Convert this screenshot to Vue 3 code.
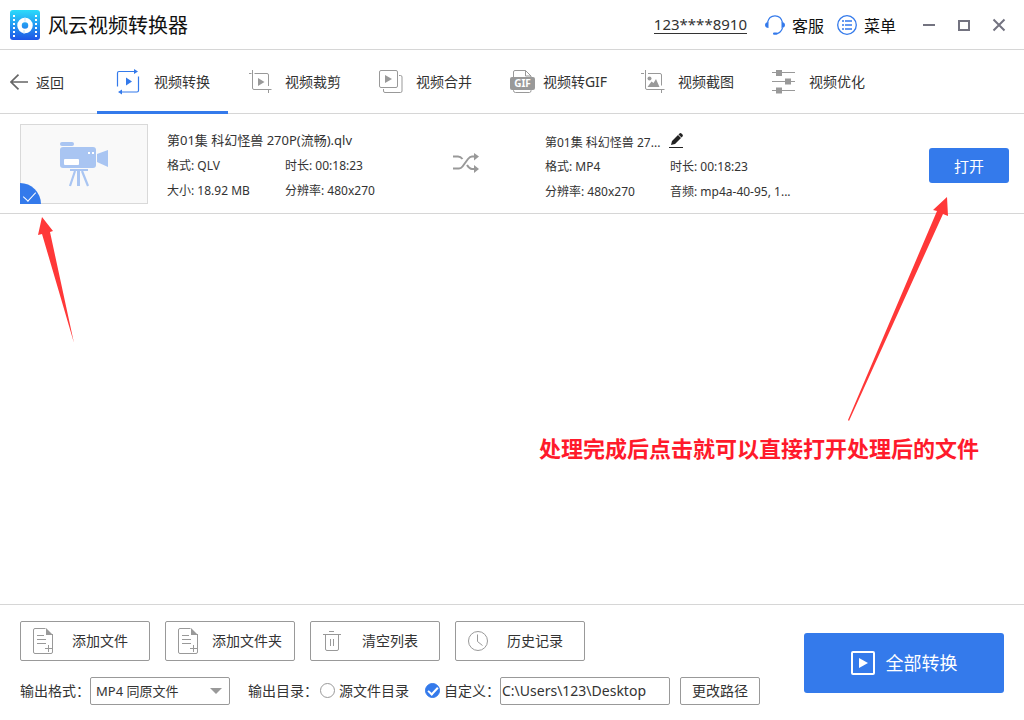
<script setup>
import { ref } from 'vue'

const tabs = [
  { id: 'convert', label: '视频转换' },
  { id: 'crop', label: '视频裁剪' },
  { id: 'merge', label: '视频合并' },
  { id: 'gif', label: '视频转GIF' },
  { id: 'shot', label: '视频截图' },
  { id: 'tune', label: '视频优化' }
]
const activeTab = ref('convert')

const actions = [
  { id: 'file', label: '添加文件' },
  { id: 'folder', label: '添加文件夹' },
  { id: 'clear', label: '清空列表' },
  { id: 'history', label: '历史记录' }
]

const selected = ref(true)
const format = ref('mp4')
const target = ref('custom')
const path = ref('C:\\Users\\123\\Desktop')
</script>

<template>
  <div class="app">
    <header class="titlebar">
      <svg class="logo" viewBox="0 0 30 30" aria-hidden="true">
        <defs>
          <linearGradient id="logoFill" x1="0" y1="0" x2="0" y2="1">
            <stop offset="0" stop-color="#2bdcfb" />
            <stop offset="1" stop-color="#1e55e6" />
          </linearGradient>
        </defs>
        <rect width="30" height="30" rx="3" fill="url(#logoFill)" />
        <path d="M4 5v22M26 5v22" stroke="#fff" stroke-width="2" stroke-dasharray="2 2" />
        <circle cx="15" cy="15.500" r="5.500" fill="none" stroke="#fff" stroke-width="4.500" />
        <path d="M15 7.500v4M14 20v4" stroke="#bfe0fb" stroke-width="1" />
      </svg>
      <h1>风云视频转换器</h1>
      <a class="account" href="#">123****8910</a>
      <button class="link support" type="button">
        <svg class="i20" viewBox="0 0 20 20" fill="none" aria-hidden="true">
          <path d="M2.500 7.500C3.500 3 6.500.800 10 .800s6.500 2.200 7.500 6.700M17.500 13c-1 3-3 5-5.500 5.700" stroke="#347aeb" stroke-width="1.200" />
          <path d="M3.500 7v6C1.500 13 0 12 0 10s1.500-3 3.500-3zM16.500 7v6c2 0 3.500-1 3.500-3s-1.500-3-3.500-3z" fill="#347aeb" />
          <rect x="8" y="17.500" width="4.500" height="2.300" rx="1.100" fill="#347aeb" />
        </svg>
        <span>客服</span>
      </button>
      <button class="link menu" type="button">
        <svg class="i20" viewBox="0 0 20 20" fill="none" stroke="#347aeb" aria-hidden="true">
          <circle cx="10" cy="10" r="9.300" stroke-width="1.300" />
          <path d="M5 6h2M8 6h7M5 10h2M8 10h7M5 14h2M8 14h7" stroke-width="1.500" />
        </svg>
        <span>菜单</span>
      </button>
      <div class="window-controls">
        <button type="button" aria-label="最小化">
          <svg viewBox="0 0 14 14"><path d="M1 7h12" stroke="#737380" stroke-width="2" /></svg>
        </button>
        <button type="button" aria-label="最大化">
          <svg viewBox="0 0 14 14"><rect x="2" y="3" width="10" height="9" fill="none" stroke="#737380" stroke-width="2" /></svg>
        </button>
        <button type="button" aria-label="关闭">
          <svg viewBox="0 0 14 14"><path d="M1.500 1.500l11 11M12.500 1.500l-11 11" stroke="#737380" stroke-width="2" /></svg>
        </button>
      </div>
    </header>

    <nav class="toolbar">
      <button class="back" type="button">
        <svg viewBox="0 0 18 16" fill="none" stroke="#666" stroke-width="1.700" aria-hidden="true">
          <path d="M8.500.700L1 8l7.500 7.300M1 8h17" />
        </svg>
        <span>返回</span>
      </button>
      <button
        v-for="tab in tabs"
        :key="tab.id"
        type="button"
        class="tab"
        :class="{ active: tab.id === activeTab }"
        @click="activeTab = tab.id"
      >
        <svg v-if="tab.id === 'convert'" viewBox="0 0 26 26" fill="none" stroke="#347aeb" aria-hidden="true">
          <path d="M1.500 17.500V4q0-1.500 1.500-1.500h16M22.500 7.500v14q0 1.500-1.500 1.500H5" stroke-width="1.200" />
          <path d="M18 0l4 2.500L18 5zM6 20.500L2 23l4 2.500zM10 8.500l6 4-6 4z" fill="#347aeb" stroke="none" />
        </svg>
        <svg v-else-if="tab.id === 'crop'" viewBox="0 0 26 26" fill="none" stroke="#999" aria-hidden="true">
          <path d="M2 4.500h2.500M5.500 1v18q0 1.500 1.500 1.500h17.500M7.500 4.500H20q1.500 0 1.500 1.500v11M21.500 21v3" />
          <path d="M11 9v8l6.500-4z" fill="#999" stroke="none" />
        </svg>
        <svg v-else-if="tab.id === 'merge'" viewBox="0 0 26 26" fill="none" stroke="#999" aria-hidden="true">
          <rect x="1.500" y="1.500" width="18" height="17" rx="1.500" />
          <path d="M21 6.500h1.500q1.500 0 1.500 1.500v14q0 1.500-1.500 1.500H7q-1.500 0-1.500-1.500v-2" />
          <path d="M7 6v8l7-4z" fill="#999" stroke="none" />
        </svg>
        <svg v-else-if="tab.id === 'gif'" viewBox="0 0 26 26" fill="none" stroke="#999" aria-hidden="true">
          <path d="M4.500 8V3q0-1.500 1.500-1.500h10.500l5.500 5.500v1M16.500 1.500V7H22M4.500 20v1.500Q4.500 23.500 6.500 23.500h14q1.500 0 1.500-2V20" />
          <rect x="1" y="8" width="25" height="13" rx="2" fill="#999" stroke="none" />
          <text x="13.500" y="18" text-anchor="middle" class="gif-text">GIF</text>
        </svg>
        <svg v-else-if="tab.id === 'shot'" viewBox="0 0 26 26" fill="none" stroke="#999" aria-hidden="true">
          <path d="M1 4.500h3M5.500 1v18q0 1.500 1.500 1.500h17.500M8 4.500h12q1.500 0 1.500 1.500v10.500M21.500 21v3" />
          <circle cx="9.500" cy="9.500" r="2" fill="#999" stroke="none" />
          <path d="M7.500 18l4-5.500 2 1.500 2.500-4 3.500 8z" fill="#999" stroke="none" />
        </svg>
        <svg v-else viewBox="0 0 26 26" fill="none" stroke="#999" aria-hidden="true">
          <path d="M1 3.500h23M1 12.500h23M1 21.500h23" />
          <path d="M5 1h6v6H5zM14 9.500h6v6h-6zM5 18.500h6v6H5z" fill="#999" stroke="none" />
        </svg>
        <span>{{ tab.label }}</span>
      </button>
    </nav>

    <main class="content">
      <ul class="list">
        <li class="item">
          <div class="thumb">
            <svg class="camera" viewBox="0 0 50 46" aria-hidden="true">
              <g fill="#a9c5f2">
                <rect x="1" y="0" width="14" height="4" rx="2" />
                <rect x="1" y="5" width="36" height="21" rx="3" />
                <path d="M38 12l11-4v17l-11-5z" />
                <path d="M11 27h18v2H11zM18 29h3v15h-3z" />
              </g>
              <path d="M16 29l-5 15M23 29l6 15" fill="none" stroke="#a9c5f2" stroke-width="2.200" />
              <rect x="5" y="17" width="15" height="6" rx="1" fill="#fff" />
              <path d="M29 10h2v2h-2zM33 10h2v2h-2z" fill="#fff" />
            </svg>
            <input v-model="selected" type="checkbox" class="pick" aria-label="选择" />
          </div>
          <div class="source">
            <h2>第01集 科幻怪兽 270P(流畅).qlv</h2>
            <p><span>格式: QLV</span><span>时长: 00:18:23</span></p>
            <p><span>大小: 18.92 MB</span><span>分辨率: 480x270</span></p>
          </div>
          <svg class="shuffle" viewBox="0 0 28 20" aria-hidden="true">
            <path d="M1 3.500h5q2.500 0 4.500 2.500M1 15.500h6q2 0 3.500-2l5.500-7.500q2-2.500 4-2.500h3M15 12q2.500 4 5 4h3" fill="none" stroke="#999" stroke-width="2" />
            <path d="M22 0l5 3.500-5 4zM22 12l5 4-5 4z" fill="#999" />
          </svg>
          <div class="result">
            <div class="name">
              <span>第01集 科幻怪兽 27...</span>
              <button type="button" aria-label="重命名">
                <svg viewBox="0 0 14 16">
                  <path d="M2 12l1-4 6-6 3 3-6 6zM9.500 1.500l1-1q1-1 2.500.500t.500 2.500l-1 1z" fill="#222" />
                  <path d="M0 14.500h14" stroke="#222" />
                </svg>
              </button>
            </div>
            <p><span>格式: MP4</span><span>时长: 00:18:23</span></p>
            <p><span>分辨率: 480x270</span><span>音频: mp4a-40-95, 1...</span></p>
          </div>
          <button class="primary open" type="button">打开</button>
        </li>
      </ul>
      <svg class="arrow arrow-left" viewBox="0 0 40 130" aria-hidden="true">
        <path d="M7 1L3 19l4-1 32 109L15 16l3-1z" fill="#ff3838" />
      </svg>
      <svg class="arrow arrow-right" viewBox="0 0 102 226" aria-hidden="true">
        <path d="M100 1L86 14l4 1L1 224l1 1 94-207 5 2z" fill="#ff3838" />
      </svg>
      <p class="note">处理完成后点击就可以直接打开处理后的文件</p>
    </main>

    <footer class="footer">
      <div class="controls">
        <div class="actions">
          <button v-for="a in actions" :key="a.id" type="button" class="outline action" :class="a.id">
            <svg v-if="a.id === 'file' || a.id === 'folder'" viewBox="0 0 24 28" fill="none" stroke="#999" aria-hidden="true">
              <path d="M14.500 1.500H4q-1.500 0-1.500 1.500v22q0 1.500 1.500 1.500h16q1.500 0 1.500-1.500V7M6 8.500h7M6 12.500h9M6 16.500h9M17.500 18v7M14 21.500h7" />
              <path d="M15 1l7 7h-7z" fill="#999" stroke="none" />
            </svg>
            <svg v-else-if="a.id === 'clear'" viewBox="0 0 24 28" fill="none" stroke="#999" aria-hidden="true">
              <path d="M8 4.500h5M2 7.500h18M4.500 8v14q0 1.500 1.500 1.500h10q1.500 0 1.500-1.500V8M9.500 12v7M12.500 12v7" />
            </svg>
            <svg v-else viewBox="0 0 24 28" fill="none" stroke="#999" aria-hidden="true">
              <circle cx="12" cy="14" r="9.500" />
              <path d="M11.500 7.500v7l5 4" />
            </svg>
            <span>{{ a.label }}</span>
          </button>
        </div>
        <div class="settings">
          <label for="format">输出格式：</label>
          <div class="select">
            <select id="format" v-model="format">
              <option value="mp4">MP4 同原文件</option>
            </select>
            <svg viewBox="0 0 12 6" aria-hidden="true"><path d="M0 0h12L6 6z" fill="#999" /></svg>
          </div>
          <span class="dir">输出目录：</span>
          <label class="radio source-dir">
            <input v-model="target" type="radio" name="target" value="source" />
            <span>源文件目录</span>
          </label>
          <label class="radio">
            <input v-model="target" type="radio" name="target" value="custom" />
            <span>自定义：</span>
          </label>
          <input v-model="path" type="text" class="path" aria-label="输出目录" />
          <button type="button" class="outline change">更改路径</button>
        </div>
      </div>
      <button class="primary all" type="button">
        <svg viewBox="0 0 24 24" aria-hidden="true">
          <rect x="1" y="1" width="22" height="22" rx="1" fill="none" stroke="#fff" stroke-width="2" />
          <path d="M8 7v10l9-5z" fill="#fff" />
        </svg>
        <span>全部转换</span>
      </button>
    </footer>
  </div>
</template>

<style>
body {
  margin: 0;
  background: #fff;
}
</style>

<style scoped>
.app {
  display: flex;
  flex-direction: column;
  min-height: 100vh;
  font-family: "Noto Sans", "Noto Sans CJK SC", sans-serif;
  font-size: 14px;
  line-height: 20px;
  color: #333;
}
.app * {
  box-sizing: border-box;
}
button,
input,
select {
  margin: 0;
  padding: 0;
  border: 0;
  background: none;
  font: inherit;
  color: inherit;
}
button {
  cursor: pointer;
}
svg {
  display: block;
  flex: none;
}
h1,
h2,
p,
ul {
  margin: 0;
  padding: 0;
  font-weight: 400;
}
span,
label,
h1,
h2 {
  white-space: nowrap;
}
.titlebar {
  display: flex;
  align-items: center;
  height: 50px;
  padding: 0 18px 0 10px;
  border-bottom: 1px solid #d6d6d6;
  color: #111;
}
.logo {
  width: 30px;
  height: 30px;
}
h1 {
  flex: 1;
  margin-left: 8px;
  padding-top: 2px;
  font-size: 20px;
  line-height: 28px;
}
.account {
  color: #333;
  font-size: 15px;
  line-height: 18px;
  text-decoration: none;
  border-bottom: 1px solid #333;
}
.link {
  display: flex;
  align-items: center;
  gap: 7px;
  font-size: 16px;
  line-height: 24px;
}
.link span {
  padding-top: 2px;
}
.support {
  margin-left: 18px;
}
.menu {
  margin-left: 13px;
}
.i20 {
  width: 20px;
  height: 20px;
}
.window-controls {
  display: flex;
  gap: 21px;
  margin-left: 26px;
}
.window-controls svg {
  width: 14px;
  height: 14px;
}
.toolbar {
  display: flex;
  height: 64px;
  border-bottom: 1px solid #d6d6d6;
}
.back {
  display: flex;
  align-items: center;
  gap: 8px;
  width: 97px;
  padding-left: 10px;
}
.back span {
  padding-top: 2px;
}
.back svg {
  width: 18px;
  height: 16px;
}
.tab {
  display: flex;
  align-items: center;
  width: 131px;
  height: 64px;
  padding: 3px 6px 0 19px;
  border-bottom: 3px solid transparent;
}
.tab.active {
  border-bottom-color: #347aeb;
}
.tab svg {
  width: 26px;
  height: 26px;
}
.tab span {
  flex: 1;
  text-align: center;
}
.gif-text {
  fill: #fff;
  stroke: none;
  font-size: 10px;
  font-weight: 700;
}
.content {
  position: relative;
  flex: 1;
}
.list {
  list-style: none;
}
.item {
  display: flex;
  align-items: flex-start;
  min-height: 100px;
  padding: 10px 15px 6px 20px;
  border-bottom: 1px solid #d6d6d6;
  font-size: 12px;
}
.thumb {
  position: relative;
  display: flex;
  justify-content: center;
  width: 128px;
  height: 80px;
  padding-top: 17px;
  border: 1px solid #d9d9d9;
  background: #f9f9f9;
}
.camera {
  width: 50px;
  height: 46px;
}
.pick {
  position: absolute;
  left: -1px;
  bottom: -1px;
  width: 21px;
  height: 21px;
  appearance: none;
  border-radius: 0 21px 0 0;
  background: #ccc;
}
.pick:checked {
  background: #347aeb;
}
.pick:checked::after {
  content: "";
  position: absolute;
  left: 6px;
  top: 6px;
  width: 6px;
  height: 11px;
  border: solid #fff;
  border-width: 0 1px 1px 0;
  transform: rotate(43deg);
}
.source {
  width: 285px;
  margin-left: 19px;
  padding-top: 6px;
}
h2 {
  margin-bottom: 6px;
  font-size: 13px;
  line-height: 20px;
}
.source p,
.result p {
  display: grid;
  height: 25px;
}
.source p {
  grid-template-columns: 118px 1fr;
}
.shuffle {
  width: 28px;
  height: 20px;
  margin-top: 29px;
}
.result {
  flex: 1;
  margin-left: 65px;
  padding-top: 9px;
}
.result p {
  grid-template-columns: 125px 1fr;
}
.name {
  display: flex;
  align-items: flex-start;
  gap: 9px;
  height: 24px;
}
.name svg {
  width: 14px;
  height: 16px;
}
.primary {
  border-radius: 3px;
  background: #347aeb;
  color: #fff;
}
.open {
  width: 80px;
  height: 35px;
  margin-top: 24px;
  font-size: 15px;
}
.arrow {
  position: absolute;
}
.arrow-left {
  left: 35px;
  top: 102px;
  width: 40px;
  height: 130px;
}
.arrow-right {
  right: 75px;
  top: 82px;
  width: 102px;
  height: 226px;
}
.note {
  position: absolute;
  right: 45px;
  top: 318px;
  color: #ff1a2b;
  font-size: 22px;
  font-weight: 700;
  line-height: 32px;
  white-space: nowrap;
}
.footer {
  display: flex;
  justify-content: space-between;
  align-items: flex-start;
  padding: 16px 20px 15px;
  border-top: 1px solid #d6d6d6;
}
.actions {
  display: flex;
  gap: 15px;
}
.outline {
  border: 1px solid #999;
  border-radius: 2px;
}
.action {
  display: flex;
  align-items: center;
  width: 130px;
  height: 40px;
  padding: 0 4px 0 10px;
}
.action.folder {
  padding-right: 0;
}
.action svg {
  width: 24px;
  height: 28px;
}
.action span {
  flex: 1;
  text-align: center;
}
.settings {
  display: flex;
  align-items: center;
  margin-top: 15px;
  height: 29px;
}
.select {
  position: relative;
  width: 140px;
}
.select select {
  width: 100%;
  height: 28px;
  padding-left: 5px;
  appearance: none;
  border: 1px solid #999;
  border-radius: 2px;
  font-size: 13px;
}
.select svg {
  position: absolute;
  right: 8px;
  top: 11px;
  width: 12px;
  height: 6px;
  pointer-events: none;
}
.dir {
  width: 72px;
  margin-left: 18px;
}
.radio {
  display: flex;
  align-items: center;
  gap: 4px;
}
.source-dir {
  width: 105px;
}
.radio input {
  position: relative;
  width: 15px;
  height: 15px;
  appearance: none;
  border: 1px solid #999;
  border-radius: 50%;
}
.radio input:checked {
  border-color: #347aeb;
  background: #347aeb;
}
.radio input:checked::after {
  content: "";
  position: absolute;
  left: 4px;
  top: 1px;
  width: 4px;
  height: 8px;
  border: solid #fff;
  border-width: 0 2px 2px 0;
  transform: rotate(43deg);
}
.path {
  width: 170px;
  height: 28px;
  padding: 0 1px;
  border: 1px solid #999;
  border-radius: 2px;
}
.change {
  width: 80px;
  height: 28px;
  margin-left: 10px;
}
.all {
  display: flex;
  align-items: center;
  justify-content: center;
  gap: 11px;
  width: 200px;
  height: 60px;
  margin-top: 12px;
  font-size: 18px;
}
.all svg {
  width: 24px;
  height: 24px;
}
</style>
